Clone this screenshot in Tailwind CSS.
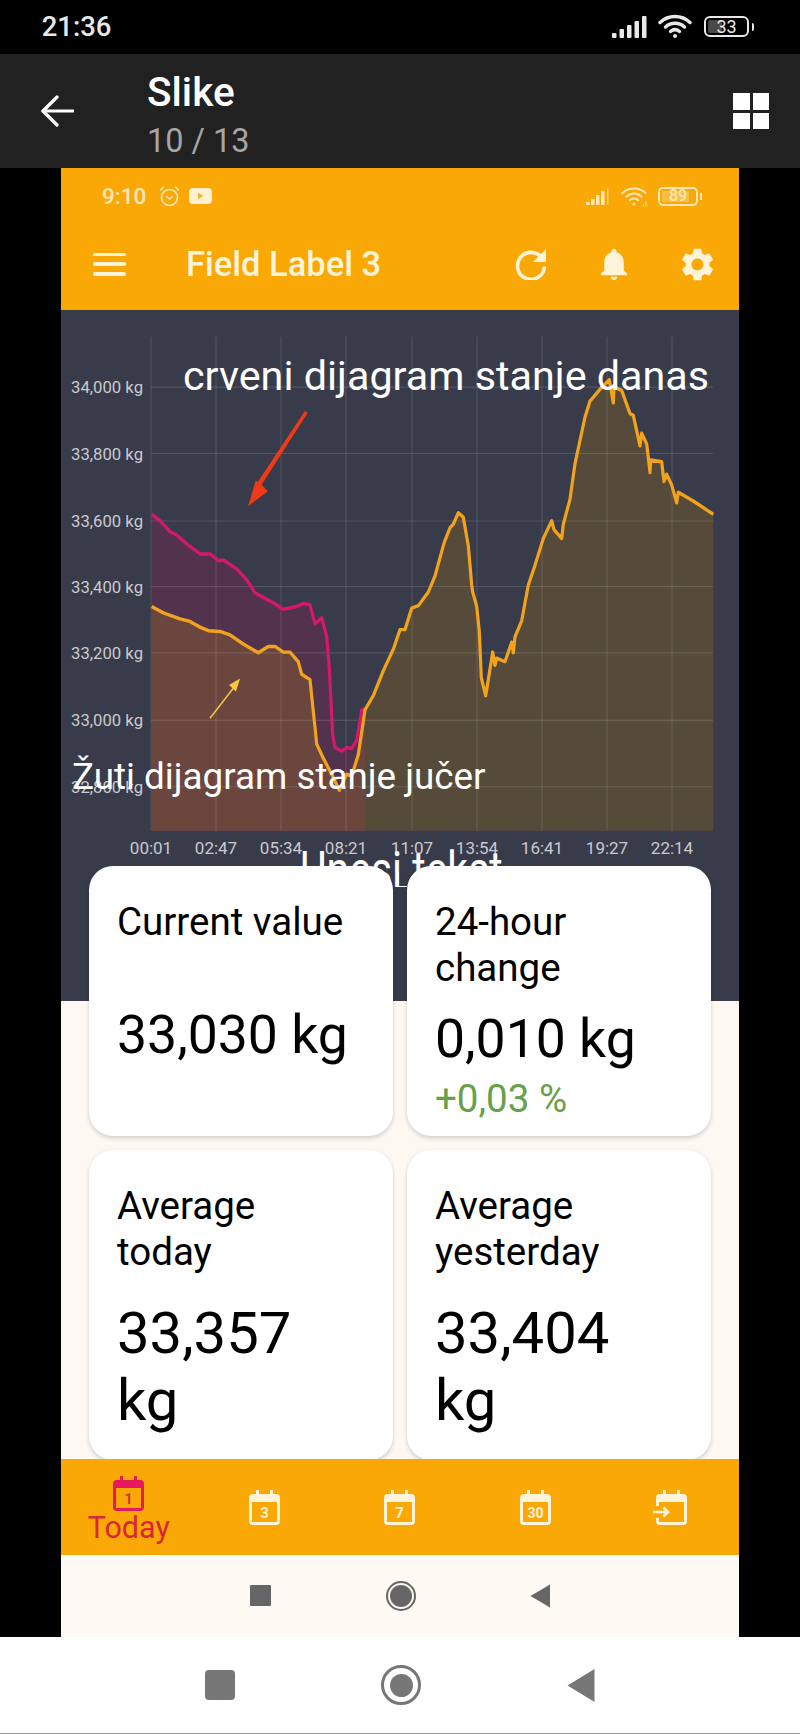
<!DOCTYPE html>
<html lang="en">

<head>
  <meta charset="UTF-8">
  <title>Slike</title>
  <meta name="viewport" content="width=device-width, initial-scale=1.0">
  <script src="https://cdn.jsdelivr.net/npm/@tailwindcss/browser@4"></script>
</head>

<body class="w-[800px] h-[1734px] bg-black font-['Roboto',sans-serif] overflow-hidden flex flex-col">

  <!-- Phone status bar -->
  <div class="h-[54px] shrink-0 flex items-center justify-between pl-[41px] pr-[46px] text-white">
    <span class="text-[28px] leading-none font-medium text-[#e8e8e8] mt-[-1px] scale-x-[0.98]">21:36</span>
    <div class="flex items-center gap-[10px] mt-[-1px]">
      <svg width="36" height="22" viewBox="0 0 36 22" fill="#e8e8e8">
        <rect x="0" y="17" width="4.5" height="5" rx="1" />
        <rect x="7.5" y="13" width="4.5" height="9" rx="1" />
        <rect x="15" y="9" width="4.5" height="13" rx="1" />
        <rect x="22.5" y="5" width="4.5" height="17" rx="1" />
        <rect x="30" y="0" width="4.5" height="22" rx="1" />
      </svg>
      <svg width="34" height="25" viewBox="0 0 34 25" fill="none" stroke="#e8e8e8" stroke-width="3.4" stroke-linecap="round">
        <path d="M2 8.5 C10.5 0.5 23.5 0.5 32 8.5" />
        <path d="M7.5 13 C13 8 21 8 26.5 13" />
        <path d="M12.5 17.5 C15.5 15 18.5 15 21.5 17.5" />
        <circle cx="17" cy="22" r="2" fill="#e8e8e8" stroke="none" />
      </svg>
      <div class="flex items-center gap-[3px] ml-[2px]">
        <div class="w-[45px] h-[21px] rounded-[6px] border-2 border-[#e8e8e8] flex items-center p-[2px] relative">
          <div class="h-full w-[14px] bg-[#484848] rounded-[2px]"></div>
          <span class="absolute inset-0 flex items-center justify-center text-[18px] leading-none text-[#e8e8e8]">33</span>
        </div>
        <div class="w-[2px] h-[8px] bg-[#e8e8e8] rounded-r"></div>
      </div>
    </div>
  </div>

  <!-- Gallery toolbar -->
  <div class="h-[114px] shrink-0 bg-[#212121] flex items-center pl-[41px] pr-[31px]">
    <svg width="33" height="32" viewBox="0 0 33 32" fill="none" stroke="#fff" stroke-width="3.2" stroke-linecap="round" stroke-linejoin="round">
      <path d="M32 16H2" />
      <path d="M16 2 2 16l14 14" />
    </svg>
    <div class="ml-[73px] flex flex-col pt-[6px]">
      <span class="text-[40.5px] leading-[46px] font-medium text-white">Slike</span>
      <span class="text-[32.5px] leading-[36px] text-[#a6a6a6] mt-[8px]">10 / 13</span>
    </div>
    <div class="ml-auto w-[36px] h-[36px] grid grid-cols-2 gap-[3px]">
      <div class="bg-white"></div>
      <div class="bg-white"></div>
      <div class="bg-white"></div>
      <div class="bg-white"></div>
    </div>
  </div>

  <!-- Photo: app screenshot -->
  <div class="mx-[61px] h-[1469px] shrink-0 flex flex-col bg-[#fdf8f1]">

    <!-- App header -->
    <div class="h-[142px] shrink-0 bg-[#faa805] text-[#fff3da] flex flex-col">
      <div class="h-[56px] flex items-center pl-[41px] pr-[37px] text-[#fde7b8]">
        <span class="text-[22.5px] leading-none font-medium mt-[1px]">9:10</span>
        <svg class="ml-[13px]" width="21" height="21" viewBox="0 0 21 21" fill="none" stroke="currentColor" stroke-width="1.6" stroke-linecap="round">
          <circle cx="10.5" cy="11.5" r="8" />
          <path d="M7.5 10.5l3 2.5 3-2.5" />
          <path d="M1.5 4 4.5 1.2" />
          <path d="M19.5 4 16.5 1.2" />
        </svg>
        <svg class="ml-[9px]" width="23" height="16" viewBox="0 0 23 16">
          <rect width="23" height="16" rx="4" fill="#fff1cf" />
          <path d="M9 4.8v6.4l5.500-3.200z" fill="#f0b040" />
        </svg>
        <svg class="ml-auto" width="24" height="17" viewBox="0 0 24 17" fill="currentColor">
          <rect x="0" y="14" width="3.5" height="3" />
          <rect x="5" y="11" width="3.5" height="6" />
          <rect x="10" y="7" width="3.5" height="10" />
          <rect x="15" y="3" width="3.5" height="14" />
          <rect x="21" y="0" width="1.5" height="17" opacity=".6" />
        </svg>
        <svg class="ml-[11px]" width="27" height="21" viewBox="0 0 27 21" fill="none" stroke="currentColor" stroke-width="2.2" stroke-linecap="round">
          <path d="M1.5 7C7.5 1 18.5 1 24.5 7" />
          <path d="M5.5 10.5C10 6.500 16 6.500 20.5 10.5" />
          <path d="M9 14C11.5 12 14.5 12 17 14" />
          <circle cx="13" cy="18" r="1.6" fill="currentColor" stroke="none" />
          <path d="M22.5 18v2M25 16v4" stroke-width="1" />
        </svg>
        <div class="ml-[10px] flex items-center gap-[2px]">
          <div class="w-[40px] h-[19px] rounded-[5px] border-2 border-current flex items-center p-[2px] relative">
            <div class="h-full w-[85%] bg-white/25"></div>
            <span class="absolute inset-0 flex items-center justify-center text-[16px] leading-none font-medium">89</span>
          </div>
          <div class="w-[2px] h-[7px] bg-current"></div>
        </div>
      </div>
      <div class="flex-1 flex items-center pl-[32px] pr-[25px] pb-[6px]">
        <div class="w-[33px] h-[23px] flex flex-col justify-between">
          <div class="h-[3.5px] bg-current rounded"></div>
          <div class="h-[3.5px] bg-current rounded"></div>
          <div class="h-[3.5px] bg-current rounded"></div>
        </div>
        <span class="ml-[60px] text-[34.5px] leading-none font-medium">Field Label 3</span>
        <svg class="ml-auto" width="34" height="32" viewBox="0 0 34 32" fill="none" stroke="currentColor" stroke-width="3.6">
          <path d="M28 10A13.5 13.5 0 1 0 30.5 18.5" />
          <path d="M32 1v13H19z" fill="currentColor" stroke="none" />
        </svg>
        <svg class="ml-[53px]" width="26" height="32" viewBox="4 2 16 20" preserveAspectRatio="none" fill="currentColor">
          <path d="M12 22c1.1 0 2-.9 2-2h-4c0 1.1.9 2 2 2zm6-6v-5c0-3.07-1.63-5.64-4.5-6.32V4c0-.83-.67-1.5-1.5-1.5s-1.5.67-1.5 1.5v.68C7.64 5.36 6 7.92 6 11v5l-2 2v1h16v-1l-2-2z" />
        </svg>
        <svg class="ml-[54px]" width="33" height="33" viewBox="2 2 20 20" fill="currentColor">
          <path d="M19.14 12.94c.04-.3.06-.61.06-.94 0-.32-.02-.64-.07-.94l2.03-1.58a.49.49 0 0 0 .12-.61l-1.92-3.32a.488.488 0 0 0-.59-.22l-2.39.96c-.5-.38-1.03-.7-1.62-.94l-.36-2.54a.484.484 0 0 0-.48-.41h-3.84c-.24 0-.43.17-.47.41l-.36 2.54c-.59.24-1.13.57-1.62.94l-2.39-.96c-.22-.08-.47 0-.59.22L2.74 8.87c-.12.21-.08.47.12.61l2.03 1.58c-.05.3-.09.63-.09.94s.02.64.07.94l-2.03 1.58a.49.49 0 0 0-.12.61l1.92 3.32c.12.22.37.29.59.22l2.39-.96c.5.38 1.03.7 1.62.94l.36 2.54c.05.24.24.41.48.41h3.84c.24 0 .44-.17.47-.41l.36-2.54c.59-.24 1.13-.56 1.62-.94l2.39.96c.22.08.47 0 .59-.22l1.92-3.32c.12-.22.07-.47-.12-.61l-2.01-1.58zM12 15.6c-1.98 0-3.6-1.62-3.6-3.6s1.62-3.6 3.6-3.6 3.6 1.62 3.6 3.6-1.62 3.6-3.6 3.6z" />
        </svg>
      </div>
    </div>

    <!-- Chart, viewBox uses page coordinates -->
    <div class="h-[691px] shrink-0 bg-[#383b4a]">
      <svg class="block" width="677" height="691" viewBox="61 310 677 691">
        <g transform="matrix(1 0 0 1.0714 0 -22.14)">
          <!-- fills -->
          <polygon fill="#564b3b" points="365,683.3 373.3,670 383.3,646.7 393.3,626.7 400,608.3 405,608.3 411.7,588.3 418.3,586 428.3,573.3 435,558.3 443.3,530 445,525 450,513.3 453.3,510 458.3,499.3 463.3,503.3 468.3,530 471.7,566.7 472.7,573.3 476.7,586.7 479.3,610 481.3,653.3 485.7,670 492.7,629.3 495,641.7 496.7,635 505,638.3 511.7,620 513.3,630 515,615 521.7,600 528.3,566.7 535,548.3 543.3,523.3 551.7,506.7 554,515 561.7,523.3 563.3,510 570,486.7 575,453.3 585,410 590,395 600,384 609.3,375 613.3,396.7 614,381.7 621.7,385 630,406.7 633.3,408.3 640,436.7 641.7,425 646.7,435 650,461.7 650.7,450 661.7,451.7 664,470 666.7,463.3 671.7,473.3 676.7,490 678.3,480 693.3,488.3 713.3,500.7 713.3,796 365,796" />
          <polygon fill="#53324e" points="151.7,500.7 160,506.7 170,516.7 176.7,520 186.7,528.3 200,537.7 210,537.7 218.3,544 223.3,543.3 236.7,551.7 246.7,561.7 255,574 263.3,578.3 273.3,583.3 283.3,589.3 296.7,586.7 303.3,584 310,585 315,602.7 321.7,597.3 326.7,615 329.3,643.3 332.7,706.7 335,718.3 341.7,721.7 346.7,718.3 351.7,719.3 356.7,711.7 361.7,683.3 365,681.7 365,796 151.7,796" />
          <polygon fill="#6b463f" points="151.7,586.7 163.3,592.7 180,598.3 190,600.7 200,606 208.3,609.3 220,610 230,613.3 243.3,621.7 258.3,630 268.3,624 275,624 283.3,629.3 290,629.3 298.3,638.3 301.7,650 310,655 316.7,715 323.3,728.3 331.7,743.3 339.3,758.3 346.7,743.3 351.7,745 358.3,725 365,683.3 365,796 151.7,796" />
          <!-- grid -->
          <g stroke="#fff" stroke-opacity=".13" stroke-width="1">
            <path d="M151 382H713M151 444H713M151 507H713M151 568H713M151 630H713M151 693H713M151 755H713" />
            <path d="M151 335V796M216 335V796M281 335V796M346 335V796M412 335V796M477 335V796M542 335V796M607 335V796M672 335V796" />
          </g>
          <!-- lines -->
          <polyline fill="none" stroke="#d6186a" stroke-width="3.2" stroke-linejoin="round" points="151.7,500.7 160,506.7 170,516.7 176.7,520 186.7,528.3 200,537.7 210,537.7 218.3,544 223.3,543.3 236.7,551.7 246.7,561.7 255,574 263.3,578.3 273.3,583.3 283.3,589.3 296.7,586.7 303.3,584 310,585 315,602.7 321.7,597.3 326.7,615 329.3,643.3 332.7,706.7 335,718.3 341.7,721.7 346.7,718.3 351.7,719.3 356.7,711.7 361.7,683.3 365,681.7" />
          <polyline fill="none" stroke="#f2a31e" stroke-width="3.2" stroke-linejoin="round" points="151.7,586.7 163.3,592.7 180,598.3 190,600.7 200,606 208.3,609.3 220,610 230,613.3 243.3,621.7 258.3,630 268.3,624 275,624 283.3,629.3 290,629.3 298.3,638.3 301.7,650 310,655 316.7,715 323.3,728.3 331.7,743.3 339.3,758.3 346.7,743.3 351.7,745 358.3,725 365,683.3 373.3,670 383.3,646.7 393.3,626.7 400,608.3 405,608.3 411.7,588.3 418.3,586 428.3,573.3 435,558.3 443.3,530 445,525 450,513.3 453.3,510 458.3,499.3 463.3,503.3 468.3,530 471.7,566.7 472.7,573.3 476.7,586.7 479.3,610 481.3,653.3 485.7,670 492.7,629.3 495,641.7 496.7,635 505,638.3 511.7,620 513.3,630 515,615 521.7,600 528.3,566.7 535,548.3 543.3,523.3 551.7,506.7 554,515 561.7,523.3 563.3,510 570,486.7 575,453.3 585,410 590,395 600,384 609.3,375 613.3,396.7 614,381.7 621.7,385 630,406.7 633.3,408.3 640,436.7 641.7,425 646.7,435 650,461.7 650.7,450 661.7,451.7 664,470 666.7,463.3 671.7,473.3 676.7,490 678.3,480 693.3,488.3 713.3,500.7" />
          <!-- arrows drawn on the photo -->
          <path d="M307 406 261 473 267 479 249 492 256 470 258 471 305 405z" fill="#f03a17" stroke="#f03a17" />
          <path d="M210 691 235 661" stroke="#f9c640" stroke-width="1.5" />
          <path d="M240 654 229 660 236 666z" fill="#f9c640" />
        </g>
        <!-- axis labels -->
        <g fill="#c9cacf" font-size="16.7" text-anchor="end">
          <text x="143" y="393">34,000 kg</text>
          <text x="143" y="460">33,800 kg</text>
          <text x="143" y="527">33,600 kg</text>
          <text x="143" y="593">33,400 kg</text>
          <text x="143" y="659">33,200 kg</text>
          <text x="143" y="726">33,000 kg</text>
          <text x="143" y="793">32,800 kg</text>
        </g>
        <g fill="#c9cacf" font-size="17" text-anchor="middle">
          <text x="151" y="854">00:01</text>
          <text x="216" y="854">02:47</text>
          <text x="281" y="854">05:34</text>
          <text x="346" y="854">08:21</text>
          <text x="412" y="854">11:07</text>
          <text x="477" y="854">13:54</text>
          <text x="542" y="854">16:41</text>
          <text x="607" y="854">19:27</text>
          <text x="672" y="854">22:14</text>
        </g>
        <!-- annotations drawn on the photo -->
        <text x="183" y="390" fill="#fff" font-size="41.3">crveni dijagram stanje danas</text>
        <text x="72" y="789" fill="#fff" font-size="36.8">Žuti dijagram stanje jučer</text>
        <text transform="translate(300 887) scale(1 1.2)" fill="#fff" font-size="41">Unesi tekst</text>
        <path d="M398.5 872V886.5H407" fill="none" stroke="#fff" stroke-width="1" />
      </svg>
    </div>

    <!-- Stat cards, pulled up over the chart and clipped by the bottom nav -->
    <div class="flex-1 min-h-0 relative">
      <div class="absolute left-0 right-0 bottom-0 top-[-135px] overflow-hidden px-[28px] grid grid-cols-2 gap-x-[14px] gap-y-[14px] content-start text-black">
        <div class="h-[270px] bg-white rounded-[24px] shadow-[0_2px_4px_rgba(0,0,0,0.18)] pl-[28px] pt-[33px]">
          <div class="text-[38.5px] leading-[46px]">Current value</div>
          <div class="text-[53.5px] leading-[67px] mt-[56px]">33,030 kg</div>
        </div>
        <div class="h-[270px] bg-white rounded-[24px] shadow-[0_2px_4px_rgba(0,0,0,0.18)] pl-[28px] pt-[33px]">
          <div class="text-[38.5px] leading-[46px]">24-hour<br>change</div>
          <div class="text-[53.5px] leading-[67px] mt-[14px]">0,010 kg</div>
          <div class="text-[38.5px] leading-[46px] mt-[4px] text-[#689f4a]">+0,03 %</div>
        </div>
        <div class="h-[310px] bg-white rounded-[24px] shadow-[0_2px_4px_rgba(0,0,0,0.18)] pl-[28px] pt-[33px]">
          <div class="text-[38.5px] leading-[46px]">Average<br>today</div>
          <div class="text-[58px] leading-[67px] mt-[25px]">33,357<br>kg</div>
        </div>
        <div class="h-[310px] bg-white rounded-[24px] shadow-[0_2px_4px_rgba(0,0,0,0.18)] pl-[28px] pt-[33px]">
          <div class="text-[38.5px] leading-[46px]">Average<br>yesterday</div>
          <div class="text-[58px] leading-[67px] mt-[25px]">33,404<br>kg</div>
        </div>
      </div>
    </div>

    <!-- App bottom nav -->
    <div class="h-[96px] shrink-0 bg-[#faa805] relative grid grid-cols-5 text-[#fff3da]">
      <div class="flex flex-col items-center pt-[17px] text-[#e5195f]">
        <svg width="31" height="35" viewBox="0 0 31 35">
          <path d="M7 0h3v4H21V0h3v4h3a4 4 0 0 1 4 4v23a4 4 0 0 1-4 4H4a4 4 0 0 1-4-4V8a4 4 0 0 1 4-4h3z" fill="currentColor" />
          <rect x="3" y="12" width="25" height="20" fill="#faa805" />
          <text x="15.5" y="28" font-size="15" font-weight="700" text-anchor="middle" fill="#c93a2c">1</text>
        </svg>
        <span class="text-[30.5px] leading-[36px] text-[#d8263c] mt-[-1px]">Today</span>
      </div>
      <div class="flex justify-center pt-[31px]">
        <svg width="31" height="35" viewBox="0 0 31 35">
          <path d="M7 0h3v4H21V0h3v4h3a4 4 0 0 1 4 4v23a4 4 0 0 1-4 4H4a4 4 0 0 1-4-4V8a4 4 0 0 1 4-4h3z" fill="currentColor" />
          <rect x="3" y="12" width="25" height="20" fill="#faa805" />
          <text x="15.5" y="28" font-size="15" font-weight="700" text-anchor="middle" fill="currentColor">3</text>
        </svg>
      </div>
      <div class="flex justify-center pt-[31px]">
        <svg width="31" height="35" viewBox="0 0 31 35">
          <path d="M7 0h3v4H21V0h3v4h3a4 4 0 0 1 4 4v23a4 4 0 0 1-4 4H4a4 4 0 0 1-4-4V8a4 4 0 0 1 4-4h3z" fill="currentColor" />
          <rect x="3" y="12" width="25" height="20" fill="#faa805" />
          <text x="15.5" y="28" font-size="15" font-weight="700" text-anchor="middle" fill="currentColor">7</text>
        </svg>
      </div>
      <div class="flex justify-center pt-[31px]">
        <svg width="31" height="35" viewBox="0 0 31 35">
          <path d="M7 0h3v4H21V0h3v4h3a4 4 0 0 1 4 4v23a4 4 0 0 1-4 4H4a4 4 0 0 1-4-4V8a4 4 0 0 1 4-4h3z" fill="currentColor" />
          <rect x="3" y="12" width="25" height="20" fill="#faa805" />
          <text x="15.5" y="28" font-size="14" font-weight="700" text-anchor="middle" fill="currentColor">30</text>
        </svg>
      </div>
      <div class="flex justify-center pt-[31px]">
        <svg class="overflow-visible" width="31" height="35" viewBox="0 0 31 35">
          <path d="M7 0h3v4H21V0h3v4h3a4 4 0 0 1 4 4v23a4 4 0 0 1-4 4H4a4 4 0 0 1-4-4V8a4 4 0 0 1 4-4h3z" fill="currentColor" />
          <rect x="3" y="12" width="25" height="20" fill="#faa805" />
          <rect x="-1" y="16" width="6" height="12" fill="#faa805" />
          <path d="M-3 22H12M7.5 17.5 12 22l-4.500 4.500" fill="none" stroke="currentColor" stroke-width="2.6" />
        </svg>
      </div>
    </div>

    <!-- App system nav -->
    <div class="h-[82px] shrink-0 flex items-center justify-center bg-[#fdf9f3] relative pb-[1px]">
      <div class="w-[21px] h-[21px] bg-[#666] rounded-[1px] mr-[115px]"></div>
      <div class="w-[30px] h-[30px] rounded-full border-2 border-[#666] p-[2px]">
        <div class="w-full h-full rounded-full bg-[#666]"></div>
      </div>
      <svg class="ml-[114px]" width="21" height="24" viewBox="0 0 21 24" fill="#666">
        <path d="M20 0.5v23L0.5 12z" />
      </svg>
    </div>
  </div>

  <!-- Phone navigation bar -->
  <div class="h-[97px] shrink-0 bg-white flex items-center justify-center border-b border-[#999]">
    <div class="w-[30px] h-[30px] bg-[#777] rounded-[4px] mr-[146px]"></div>
    <div class="w-[40px] h-[40px] rounded-full border-[3px] border-[#777] flex items-center justify-center">
      <div class="w-[23px] h-[23px] rounded-full bg-[#777]"></div>
    </div>
    <svg class="ml-[146px]" width="28" height="35" viewBox="0 0 28 35" fill="#777">
      <path d="M27.5 1v33L0.5 17.5z" />
    </svg>
  </div>

</body>

</html>
